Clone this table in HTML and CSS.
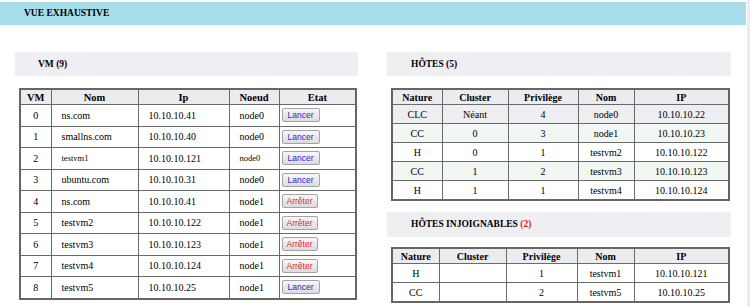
FILE: index.html
```html
<!DOCTYPE html>
<html lang="fr">
<head>
<meta charset="utf-8">
<title>Vue exhaustive</title>
<link rel="stylesheet" href="styles.css">
</head>
<body>
<div class="page">
  <div class="main">
    <div class="topbar">VUE EXHAUSTIVE</div>
    <div class="cols">
      <section class="col col-left">
        <div class="sectitle">VM (9)</div>
        <table class="grid vm">
          <colgroup>
            <col class="c-vm"><col class="c-nom"><col class="c-ip"><col class="c-noeud"><col class="c-etat">
          </colgroup>
          <thead>
            <tr><th>VM</th><th>Nom</th><th>Ip</th><th>Noeud</th><th>Etat</th></tr>
          </thead>
          <tbody>
            <tr><td class="ctr">0</td><td>ns.com</td><td>10.10.10.41</td><td>node0</td><td class="btncell"><button class="btn start">Lancer</button></td></tr>
            <tr><td class="ctr">1</td><td>smallns.com</td><td>10.10.10.40</td><td>node0</td><td class="btncell"><button class="btn start">Lancer</button></td></tr>
            <tr><td class="ctr">2</td><td class="small">testvm1</td><td>10.10.10.121</td><td class="small">node0</td><td class="btncell"><button class="btn start">Lancer</button></td></tr>
            <tr><td class="ctr">3</td><td>ubuntu.com</td><td>10.10.10.31</td><td>node0</td><td class="btncell"><button class="btn start">Lancer</button></td></tr>
            <tr><td class="ctr">4</td><td>ns.com</td><td>10.10.10.41</td><td>node1</td><td class="btncell"><button class="btn stop">Arrêter</button></td></tr>
            <tr><td class="ctr">5</td><td>testvm2</td><td>10.10.10.122</td><td>node1</td><td class="btncell"><button class="btn stop">Arrêter</button></td></tr>
            <tr><td class="ctr">6</td><td>testvm3</td><td>10.10.10.123</td><td>node1</td><td class="btncell"><button class="btn stop">Arrêter</button></td></tr>
            <tr><td class="ctr">7</td><td>testvm4</td><td>10.10.10.124</td><td>node1</td><td class="btncell"><button class="btn stop">Arrêter</button></td></tr>
            <tr><td class="ctr">8</td><td>testvm5</td><td>10.10.10.25</td><td>node1</td><td class="btncell"><button class="btn start">Lancer</button></td></tr>
          </tbody>
        </table>
      </section>
      <section class="col col-right">
        <div class="sectitle">HÔTES (5)</div>
        <table class="grid hosts">
          <colgroup>
            <col class="h-nature"><col class="h-cluster"><col class="h-priv"><col class="h-nom"><col class="h-ip">
          </colgroup>
          <thead>
            <tr><th>Nature</th><th>Cluster</th><th>Privilège</th><th>Nom</th><th>IP</th></tr>
          </thead>
          <tbody>
            <tr class="r-gray"><td>CLC</td><td>Néant</td><td>4</td><td>node0</td><td>10.10.10.22</td></tr>
            <tr class="r-green"><td>CC</td><td>0</td><td>3</td><td>node1</td><td>10.10.10.23</td></tr>
            <tr><td>H</td><td>0</td><td>1</td><td>testvm2</td><td>10.10.10.122</td></tr>
            <tr class="r-green"><td>CC</td><td>1</td><td>2</td><td>testvm3</td><td>10.10.10.123</td></tr>
            <tr><td>H</td><td>1</td><td>1</td><td>testvm4</td><td>10.10.10.124</td></tr>
          </tbody>
        </table>
        <div class="sectitle sectitle-2">HÔTES INJOIGNABLES <span class="red">(2)</span></div>
        <table class="grid hosts unreach">
          <colgroup>
            <col class="u-nature"><col class="u-cluster"><col class="u-priv"><col class="u-nom"><col class="u-ip">
          </colgroup>
          <thead>
            <tr><th>Nature</th><th>Cluster</th><th>Privilège</th><th>Nom</th><th>IP</th></tr>
          </thead>
          <tbody>
            <tr><td>H</td><td></td><td>1</td><td>testvm1</td><td>10.10.10.121</td></tr>
            <tr><td>CC</td><td></td><td>2</td><td>testvm5</td><td>10.10.10.25</td></tr>
          </tbody>
        </table>
      </section>
    </div>
  </div>
  <div class="strip"></div>
</div>
</body>
</html>
```
FILE: styles.css
```css
html, body {
  margin: 0;
  padding: 0;
  background: #ffffff;
}
body {
  font-family: "Liberation Serif", "Times New Roman", serif;
  color: #000;
}
.page {
  display: flex;
  height: 307px;
  overflow: hidden;
}
.main {
  width: 746px;
  flex: none;
}
.strip {
  width: 3px;
  margin-left: 1px;
  background: #ececf0;
  flex: none;
}
.topbar {
  margin-top: 2px;
  height: 23px;
  line-height: 23px;
  padding-left: 24px;
  background: #a7dcea;
  font-weight: bold;
  font-size: 9.5px;
}
.cols {
  display: flex;
  padding-top: 27px;
  padding-left: 15px;
  gap: 29px;
}
.col-left {
  width: 343px;
}
.col-right {
  width: 344px;
}
.sectitle {
  height: 24px;
  line-height: 24px;
  padding-left: 23px;
  background: #efeff3;
  font-weight: bold;
  font-size: 9.5px;
}
.col-right .sectitle {
  padding-left: 24px;
}
.sectitle-2 {
  margin-top: 11px;
  height: 25px;
  line-height: 25px;
}
.red {
  color: #e01818;
}
.grid {
  border-collapse: collapse;
  table-layout: fixed;
  margin-top: 12px;
  margin-left: 4px;
  border: 2px solid #666;
  font-size: 10px;
}
.grid th, .grid td {
  border: 1px solid #6a6a6a;
  padding: 0;
  white-space: nowrap;
  overflow: hidden;
}
.grid th {
  background: #ebebf0;
  font-weight: bold;
  text-align: center;
  height: 14px;
  font-size: 10px;
}
.vm {
  width: 336px;
}
.vm th {
  font-size: 10.5px;
}
.vm td {
  height: 20.5px;
  padding-left: 10px;
}
.vm td.ctr {
  text-align: center;
  padding-left: 0;
}
.vm td.small {
  font-size: 8.5px;
}
.vm td.btncell {
  padding-left: 2px;
}
.c-vm { width: 31px; }
.c-nom { width: 87px; }
.c-ip { width: 91px; }
.c-noeud { width: 50px; }
.c-etat { width: 77px; }

.hosts {
  width: 337px;
}
.hosts td {
  height: 18px;
  text-align: center;
}
.h-nature { width: 50px; }
.h-cluster { width: 66px; }
.h-priv { width: 70px; }
.h-nom { width: 56px; }
.h-ip { width: 95px; }
.unreach {
  margin-top: 10px;
}
.u-nature { width: 47px; }
.u-cluster { width: 67px; }
.u-priv { width: 71px; }
.u-nom { width: 57px; }
.u-ip { width: 95px; }
.r-gray td {
  background: #eeeef3;
}
.r-green td {
  background: #f1f8f4;
}

.btn {
  font-family: "Liberation Sans", Arial, sans-serif;
  font-size: 8.5px;
  height: 14px;
  line-height: 12px;
  padding: 0;
  border: 1px solid #a3a3a8;
  border-radius: 2px;
  background: linear-gradient(#f7f7f9, #dcdce0);
  display: block;
  cursor: pointer;
}
.btn.start {
  width: 38px;
  color: #2a2ad0;
}
.btn.stop {
  width: 36px;
  color: #e02a2a;
}
```
